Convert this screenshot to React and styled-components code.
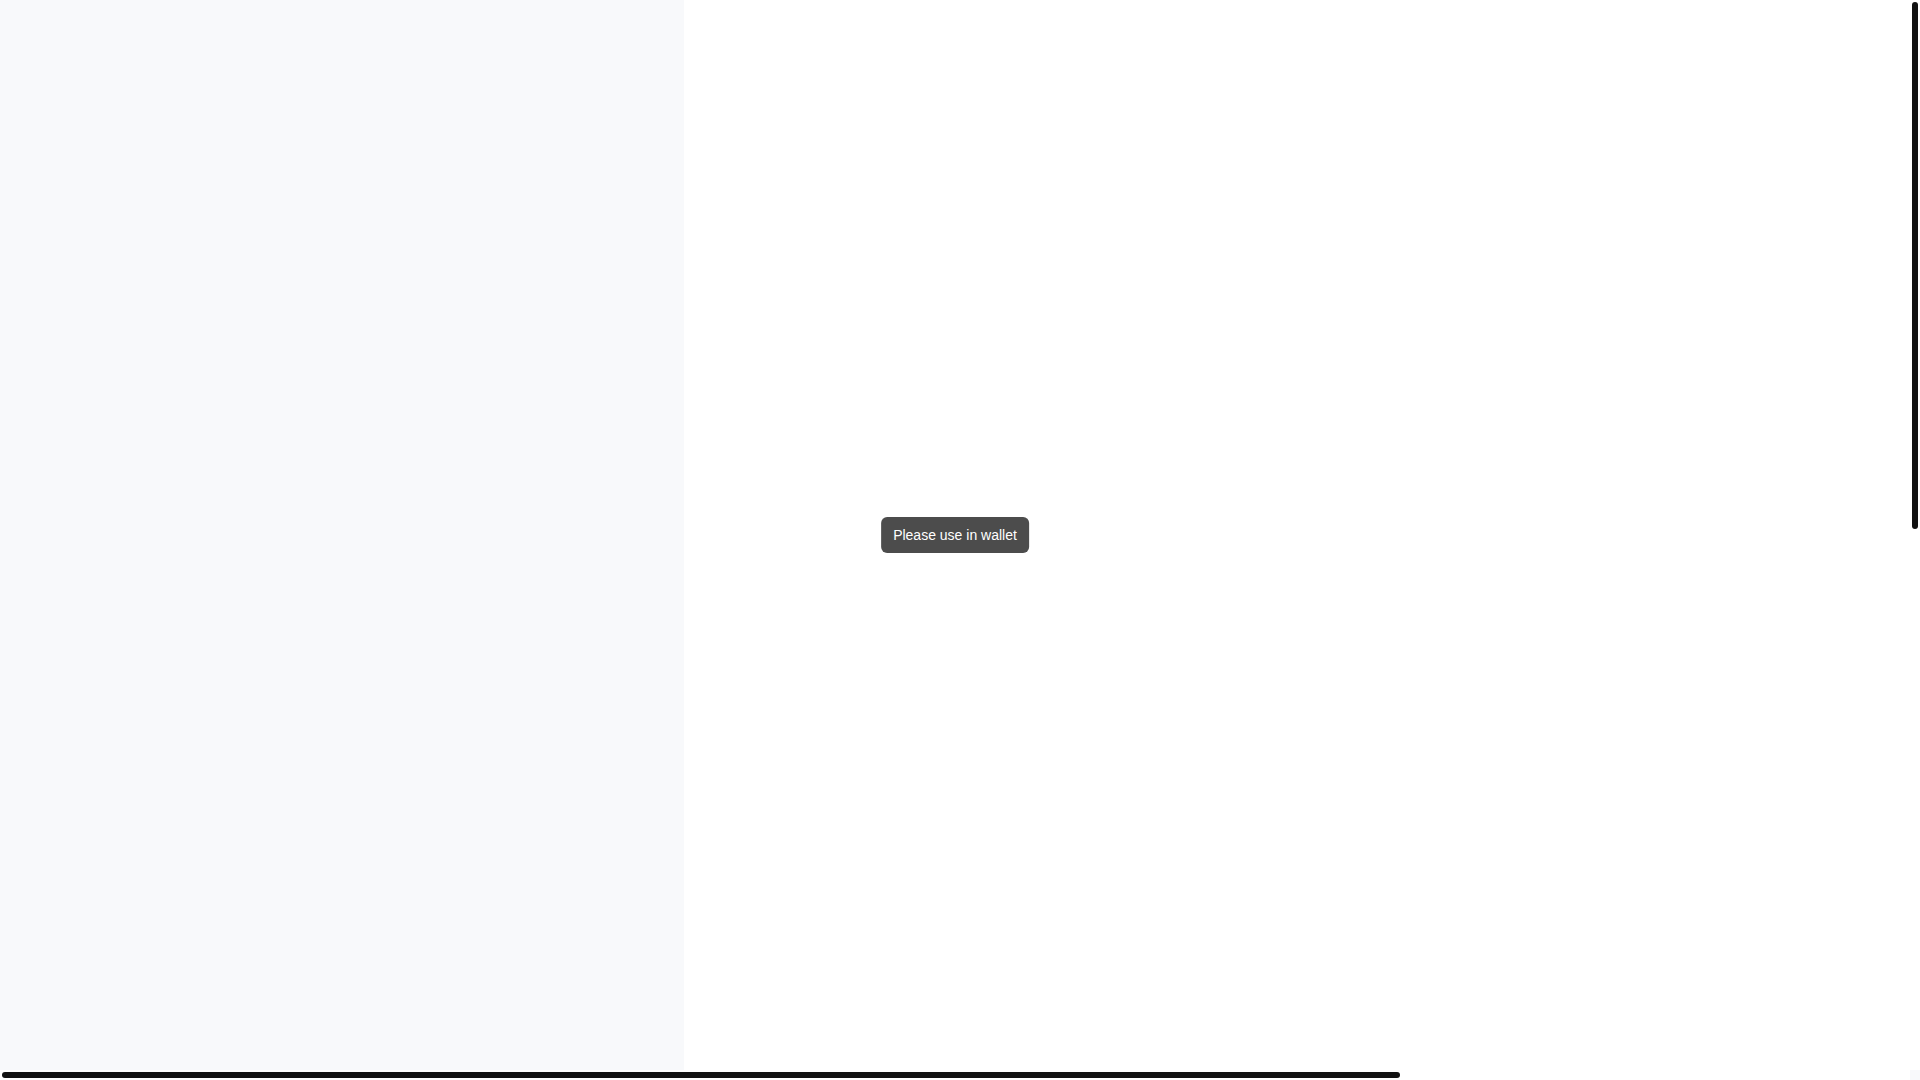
import React from 'react'
import styled, { createGlobalStyle } from 'styled-components'

const GlobalStyle = createGlobalStyle`
    html, body {
        margin: 0;
        padding: 0;
        background: #ffffff;
        font-family: "Liberation Sans", Arial, sans-serif;
        overflow: hidden;
    }
`;

const VIEW_W = 1910
const VIEW_H = 1070
const PAGE_W = 2606
const PAGE_H = 2164

function App() {
    const vThumb = Math.round((VIEW_H * VIEW_H) / PAGE_H) - 2
    const hThumb = Math.round((VIEW_W * VIEW_W) / PAGE_W) - 2

    return (
        <>
            <GlobalStyle />
            <Frame>
                <Content>
                    <Sidebar />
                    <Main />
                    <Toast>Please use in wallet</Toast>
                </Content>
                <TrackV>
                    <ThumbV style={{ height: vThumb }} />
                </TrackV>
                <TrackH>
                    <ThumbH style={{ width: hThumb }} />
                </TrackH>
                <Corner />
            </Frame>
        </>
    )
}

export default App

const Frame = styled.div`
    display: grid;
    grid-template-columns: 1fr 10px;
    grid-template-rows: 1fr 10px;
    width: 100vw;
    height: 100vh;
    overflow: hidden;
`;

const Content = styled.div`
    position: relative;
    display: flex;
    min-width: 0;
    min-height: 0;
    overflow: hidden;
`;

const Sidebar = styled.aside`
    flex: 0 0 684px;
    background-color: #f8f9fb;
`;

const Main = styled.main`
    flex: 1;
    background-color: #ffffff;
`;

const TrackV = styled.div`
    background: #ffffff;
    padding: 2px;
`;

const ThumbV = styled.div`
    width: 6px;
    background: #111111;
    border-radius: 3px;
`;

const TrackH = styled.div`
    background: #ffffff;
    padding: 2px;
`;

const ThumbH = styled.div`
    height: 6px;
    background: #111111;
    border-radius: 3px;
`;

const Corner = styled.div`
    background: #f8f9fb;
`;

const Toast = styled.div`
    position: absolute;
    top: 50%;
    left: 50%;
    transform: translate(-50%, -50%);
    padding: 8px 12px;
    background-color: rgba(0, 0, 0, 0.7);
    color: #ffffff;
    font-size: 14px;
    line-height: 20px;
    border-radius: 6px;
    white-space: nowrap;
`;
